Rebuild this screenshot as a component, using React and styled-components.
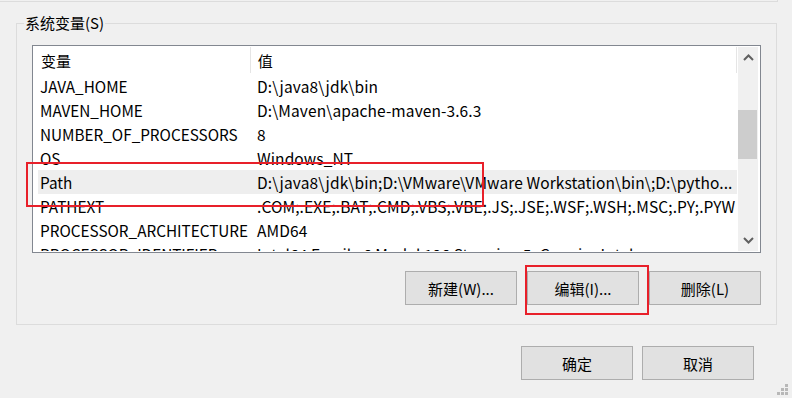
import React from "react";
import styled, { createGlobalStyle } from "styled-components";

const Global = createGlobalStyle`
  html, body { margin: 0; padding: 0; background: #f0f0f0; }
  body {
    font-family: "Noto Sans CJK SC", "Noto Sans", sans-serif;
    font-size: 15px;
    color: #000;
  }
  * { box-sizing: border-box; }
`;

const Window = styled.div`
  position: relative;
  width: 792px;
  height: 398px;
  overflow: hidden;
  background: #f0f0f0;
  display: flex;
  flex-direction: column;
`;

const PrevGroup = styled.div`
  width: 778px;
  height: 3px;
  margin-top: -1px;
  border-bottom: 1px solid #dcdcdc;
  border-right: 1px solid #dcdcdc;
  flex: none;
`;

const Group = styled.div`
  margin: 21px 0 0 16px;
  width: 761px;
  height: 302px;
  border: 1px solid #dcdcdc;
  padding: 0 15px 0 15px;
  display: flex;
  flex-direction: column;
  flex: none;
`;

const Legend = styled.div`
  align-self: flex-start;
  margin: -11px 0 0 -8px;
  padding: 0 1px;
  height: 20px;
  line-height: 20px;
  background: #f0f0f0;
`;

const ListBox = styled.div`
  margin-top: 12px;
  width: 729px;
  height: 208px;
  border: 1px solid #828790;
  background: #fff;
  padding: 1px;
  display: flex;
  overflow: hidden;
  flex: none;
`;

const ListContent = styled.div`
  flex: 1;
  padding-left: 4px;
  overflow: hidden;
  display: flex;
  flex-direction: column;
`;

const HeaderRow = styled.div`
  display: flex;
  height: 27px;
  flex: none;
`;

const HeaderCell = styled.div`
  width: ${(p) => p.$w}px;
  padding-left: ${(p) => p.$pad}px;
  line-height: 28px;
  border-right: 1px solid #e5e5e5;
  margin: 0 0 1px 0;
`;

const Row = styled.div`
  display: flex;
  height: 24px;
  flex: none;
  background: ${(p) => (p.$selected ? "#eeeeee" : "transparent")};
  width: 699px;
`;

const Cell = styled.div`
  width: ${(p) => p.$w}px;
  padding-left: ${(p) => p.$pad}px;
  font-size: ${(p) => (p.$value ? "15.5px" : "15.3px")};
  letter-spacing: ${(p) => (p.$value ? "0.1px" : "0")};
  line-height: 25px;
  white-space: nowrap;
  overflow: hidden;
  flex: none;
`;

const ScrollBar = styled.div`
  width: 20px;
  margin-left: 1px;
  margin-right: 1px;
  background: #f0f0f0;
  display: flex;
  flex-direction: column;
  align-items: stretch;
  flex: none;
`;

const ArrowBtn = styled.div`
  height: 21px;
  display: flex;
  align-items: center;
  justify-content: center;
  flex: none;
`;

const Track = styled.div`
  flex: 1;
  display: flex;
  flex-direction: column;
  padding-top: ${(p) => p.$offset}px;
`;

const Thumb = styled.div`
  height: 49px;
  background: #cdcdcd;
  margin: 0 1px 0 0;
`;

const ButtonRow = styled.div`
  display: flex;
  justify-content: flex-end;
  gap: ${(p) => p.$gap}px;
  margin-top: ${(p) => p.$top}px;
  margin-right: ${(p) => p.$right}px;
`;

const Button = styled.button`
  width: 112px;
  height: 34px;
  border: 1px solid #adadad;
  background: #e1e1e1;
  font-family: inherit;
  font-size: 15px;
  color: #000;
  padding: 0;
  cursor: default;
`;

const Highlight = styled.div`
  position: absolute;
  border: 2px solid #e8202a;
  left: ${(p) => p.$x}px;
  top: ${(p) => p.$y}px;
  width: ${(p) => p.$w}px;
  height: ${(p) => p.$h}px;
  pointer-events: none;
`;

const Grip = styled.svg`
  position: absolute;
  right: 3px;
  bottom: 2px;
`;

const rows = [
  ["JAVA_HOME", "D:\\java8\\jdk\\bin"],
  ["MAVEN_HOME", "D:\\Maven\\apache-maven-3.6.3"],
  ["NUMBER_OF_PROCESSORS", "8"],
  ["OS", "Windows_NT"],
  ["Path", "D:\\java8\\jdk\\bin;D:\\VMware\\VMware Workstation\\bin\\;D:\\pytho..."],
  ["PATHEXT", ".COM;.EXE;.BAT;.CMD;.VBS;.VBE;.JS;.JSE;.WSF;.WSH;.MSC;.PY;.PYW"],
  ["PROCESSOR_ARCHITECTURE", "AMD64"],
  ["PROCESSOR_IDENTIFIER", "Intel64 Family 6 Model 126 Stepping 5, GenuineIntel"],
];

const Chevron = ({ up }) => (
  <svg width="11" height="7" viewBox="0 0 11 7">
    <path
      d={up ? "M1 6 L5.5 1.5 L10 6" : "M1 1 L5.5 5.5 L10 1"}
      fill="none"
      stroke="#606060"
      strokeWidth="2"
    />
  </svg>
);

export default function App() {
  return (
    <Window>
      <Global />
      <PrevGroup />
      <Group>
        <Legend>系统变量(S)</Legend>
        <ListBox>
          <ListContent>
            <HeaderRow>
              <HeaderCell $w={213} $pad={3}>变量</HeaderCell>
              <HeaderCell $w={487} $pad={7}>值</HeaderCell>
            </HeaderRow>
            {rows.map(([k, v]) => (
              <Row key={k} $selected={k === "Path"}>
                <Cell $w={212} $pad={2}>{k}</Cell>
                <Cell $w={487} $pad={7} $value>{v}</Cell>
              </Row>
            ))}
          </ListContent>
          <ScrollBar>
            <ArrowBtn><Chevron up /></ArrowBtn>
            <Track $offset={42}>
              <Thumb />
            </Track>
            <ArrowBtn><Chevron /></ArrowBtn>
          </ScrollBar>
        </ListBox>
        <ButtonRow $gap={10} $top={18} $right={0}>
          <Button>新建(W)...</Button>
          <Button>编辑(I)...</Button>
          <Button>删除(L)</Button>
        </ButtonRow>
      </Group>
      <ButtonRow $gap={9} $top={21} $right={38}>
        <Button>确定</Button>
        <Button>取消</Button>
      </ButtonRow>
      <Grip width="12" height="12" viewBox="0 0 12 12">
        <rect x="8" y="0" width="3" height="3" fill="#b8b8b8" />
        <rect x="4" y="4" width="3" height="3" fill="#b8b8b8" />
        <rect x="8" y="4" width="3" height="3" fill="#b8b8b8" />
        <rect x="0" y="8" width="3" height="3" fill="#b8b8b8" />
        <rect x="4" y="8" width="3" height="3" fill="#b8b8b8" />
        <rect x="8" y="8" width="3" height="3" fill="#b8b8b8" />
      </Grip>
      <Highlight $x={26} $y={162} $w={458} $h={45} />
      <Highlight $x={525} $y={265} $w={124} $h={50} />
    </Window>
  );
}
